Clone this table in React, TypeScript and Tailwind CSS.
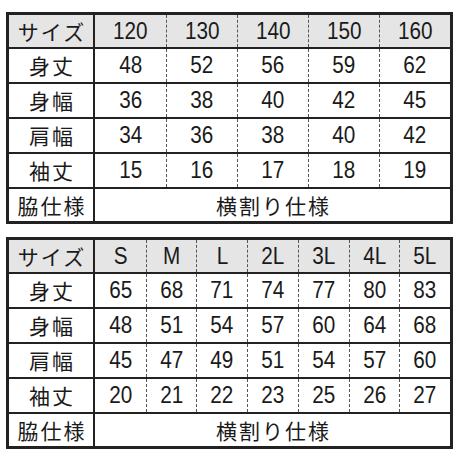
const jp = "font-['Noto_Sans_CJK_JP',sans-serif]";

interface SizeTable {
  sizes: string[];
  rows: { label: string; values: number[] }[];
}

const kids: SizeTable = {
  sizes: ['120', '130', '140', '150', '160'],
  rows: [
    { label: '身丈', values: [48, 52, 56, 59, 62] },
    { label: '身幅', values: [36, 38, 40, 42, 45] },
    { label: '肩幅', values: [34, 36, 38, 40, 42] },
    { label: '袖丈', values: [15, 16, 17, 18, 19] },
  ],
};

const adult: SizeTable = {
  sizes: ['S', 'M', 'L', '2L', '3L', '4L', '5L'],
  rows: [
    { label: '身丈', values: [65, 68, 71, 74, 77, 80, 83] },
    { label: '身幅', values: [48, 51, 54, 57, 60, 64, 68] },
    { label: '肩幅', values: [45, 47, 49, 51, 54, 57, 60] },
    { label: '袖丈', values: [20, 21, 22, 23, 25, 26, 27] },
  ],
};

function Num({ children }: { children: React.ReactNode }) {
  return (
    <span className="inline-block scale-x-[0.9] font-['Liberation_Sans',sans-serif] text-[23px] leading-none">
      {children}
    </span>
  );
}

function Label({ children }: { children: React.ReactNode }) {
  return (
    <div
      className={`flex items-center justify-center border-r-2 border-[#222] pl-[2px] text-[21px] leading-none tracking-[2px] ${jp}`}
    >
      {children}
    </div>
  );
}

function Cell({ first, children }: { first: boolean; children: React.ReactNode }) {
  return (
    <div
      className={`flex items-center justify-center ${first ? '' : 'border-l border-dashed border-[#555]'}`}
    >
      {children}
    </div>
  );
}

function Table({ data }: { data: SizeTable }) {
  const cols = data.sizes.length === 5 ? 'grid-cols-[86px_repeat(5,1fr)]' : 'grid-cols-[86px_repeat(7,1fr)]';
  return (
    <div className="w-[447px] border-[3px] border-[#222] text-[#1a1a1a]">
      <div className={`grid ${cols} h-[32px] bg-[#e5e5e5]`}>
        <Label>サイズ</Label>
        {data.sizes.map((s, i) => (
          <Cell key={s} first={i === 0}>
            <Num>{s}</Num>
          </Cell>
        ))}
      </div>
      {data.rows.map((r) => (
        <div key={r.label} className={`grid ${cols} h-[35px] border-t-2 border-[#222] bg-white`}>
          <Label>{r.label}</Label>
          {r.values.map((v, i) => (
            <Cell key={i} first={i === 0}>
              <Num>{v}</Num>
            </Cell>
          ))}
        </div>
      ))}
      <div className="grid h-[34px] grid-cols-[86px_1fr] border-t-2 border-[#222] bg-white">
        <Label>脇仕様</Label>
        <div className={`flex items-center justify-center pl-[2px] text-[21px] leading-none tracking-[2px] ${jp}`}>
          横割り仕様
        </div>
      </div>
    </div>
  );
}

export default function App() {
  return (
    <div className="flex h-[460px] w-[460px] flex-col gap-[13px] bg-white pl-[6px] pt-[12px]">
      <Table data={kids} />
      <Table data={adult} />
    </div>
  );
}
